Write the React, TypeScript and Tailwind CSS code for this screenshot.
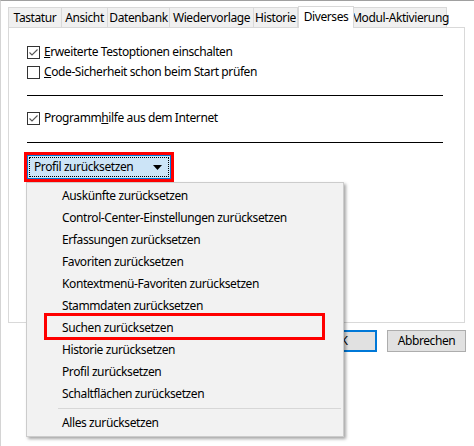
import React from "react";

const tabs = [
  { label: "Tastatur", w: "w-[54px]" },
  { label: "Ansicht", w: "w-[47px]" },
  { label: "Datenbank", w: "w-[63px]" },
  { label: "Wiedervorlage", w: "w-[85px]" },
  { label: "Historie", w: "w-[45px]" },
  { label: "Diverses", w: "w-[56px]", active: true },
  { label: "Modul-Aktivierung", w: "w-[94px]" },
];

const menuItems = [
  "Auskünfte zurücksetzen",
  "Control-Center-Einstellungen zurücksetzen",
  "Erfassungen zurücksetzen",
  "Favoriten zurücksetzen",
  "Kontextmenü-Favoriten zurücksetzen",
  "Stammdaten zurücksetzen",
  "Suchen zurücksetzen",
  "Historie zurücksetzen",
  "Profil zurücksetzen",
  "Schaltflächen zurücksetzen",
];

function CheckBox({ checked }: { checked?: boolean }) {
  return (
    <span className="flex h-[13px] w-[13px] shrink-0 items-center justify-center border border-[#333] bg-white">
      {checked ? (
        <svg width="11" height="11" viewBox="0 0 11 11">
          <path d="M1.5 5.5 L4 8 L9.5 2.5" fill="none" stroke="#555" strokeWidth="1.1" />
        </svg>
      ) : null}
    </span>
  );
}

function CheckRow({ checked, children }: { checked?: boolean; children: React.ReactNode }) {
  return (
    <div className="flex h-[20px] items-center gap-[4px]">
      <CheckBox checked={checked} />
      <span className="whitespace-nowrap">{children}</span>
    </div>
  );
}

export default function App() {
  return (
    <div
      className="relative h-[446px] w-[474px] overflow-hidden border-l border-t border-l-[#d4d4d4] border-t-[#a0a0a0] bg-white text-[12px] tracking-[-0.4px] text-black"
      style={{ fontFamily: '"Noto Sans", "Segoe UI", sans-serif' }}
    >
      {/* tab strip */}
      <div className="ml-[7px] mt-[5px] flex h-[21px] items-end">
        {tabs.map((t) =>
          t.active ? (
            <div
              key={t.label}
              className={`${t.w} relative z-10 -mb-px flex h-[22px] items-center justify-center whitespace-nowrap border border-b-0 border-[#d9d9d9] bg-white pb-[2px]`}
            >
              {t.label}
            </div>
          ) : (
            <div
              key={t.label}
              className={`${t.w} -ml-px flex h-[20px] items-center justify-center whitespace-nowrap border border-b-0 border-[#d9d9d9] bg-[#f0f0f0] first:ml-0`}
            >
              {t.label}
            </div>
          )
        )}
      </div>

      {/* panel */}
      <div className="ml-[7px] h-[296px] w-[457px] border border-[#d9d9d9] bg-white pl-[18px] pt-[14px]">
        <CheckRow checked>
          <span className="underline">E</span>rweiterte Testoptionen einschalten
        </CheckRow>
        <CheckRow>
          <span className="underline">C</span>ode-Sicherheit schon beim Start prüfen
        </CheckRow>
        <div className="mt-[13px] h-px w-[416px] bg-black" />
        <div className="mt-[12px]">
          <CheckRow checked>
            Programm<span className="underline">h</span>ilfe aus dem Internet
          </CheckRow>
        </div>
        <div className="mt-[14px] h-px w-[416px] bg-black" />

        {/* combo in red highlight */}
        <div className="-ml-[3px] mt-[9px] h-[30px] w-[150px] border-[3px] border-[#ff0000]">
          <div className="flex h-full items-center border border-[#0078d7] bg-[#cce4f7] p-px">
            <div className="flex h-full w-full items-center justify-between whitespace-nowrap border border-dotted border-black pl-[4px] pr-[6px]">
              <span>Profil zurücksetzen</span>
              <svg width="9" height="5" viewBox="0 0 9 5">
                <path d="M0 0 H9 L4.5 5 Z" fill="#000" />
              </svg>
            </div>
          </div>
        </div>
      </div>

      {/* buttons */}
      <div className="mt-[7px] flex justify-end gap-[10px] pr-[8px]">
        <button className="h-[22px] w-[75px] border-2 border-[#0078d7] bg-[#e1e1e1]">OK</button>
        <button className="h-[22px] w-[79px] border border-[#adadad] bg-[#e1e1e1]">Abbrechen</button>
      </div>

      {/* open dropdown menu */}
      <div className="absolute left-[25px] top-[181px] z-20 w-[318px] border border-[#ccc] bg-[#f2f2f2] py-[2px] shadow-[2px_2px_3px_rgba(0,0,0,0.35)]">
        {menuItems.map((m) => (
          <div key={m} className="relative flex h-[22px] items-center whitespace-nowrap pl-[35px]">
            {m}
            {m === "Suchen zurücksetzen" ? (
              <div className="absolute -top-[4px] left-[17px] h-[27px] w-[281px] border-[3px] border-[#ff0000]" />
            ) : null}
          </div>
        ))}
        <div className="my-[3px] ml-[31px] mr-[2px] h-px bg-[#d7d7d7]" />
        <div className="flex h-[22px] items-center pl-[35px]">Alles zurücksetzen</div>
      </div>
    </div>
  );
}
